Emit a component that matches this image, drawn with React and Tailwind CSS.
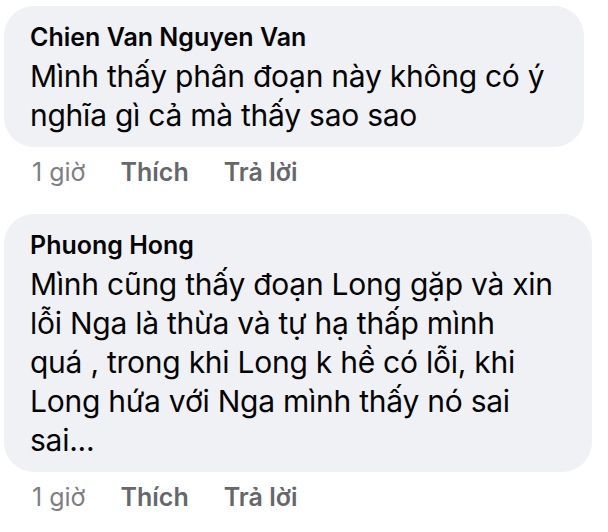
import React from "react";

const comments = [
  {
    name: "Chien Van Nguyen Van",
    width: "w-[580px]",
    lines: ["Mình thấy phân đoạn này không có ý", "nghĩa gì cả mà thấy sao sao"],
  },
  {
    name: "Phuong Hong",
    width: "w-[588px]",
    lines: [
      "Mình cũng thấy đoạn Long gặp và xin",
      "lỗi Nga là thừa và tự hạ thấp mình",
      "quá , trong khi Long k hề có lỗi, khi",
      "Long hứa với Nga mình thấy nó sai",
      "sai...",
    ],
  },
];

function Comment({ name, width, lines }) {
  return (
    <div className="flex flex-col items-start">
      {/* bubble */}
      <div className={`${width} rounded-[30px] bg-[#f0f1f5] pt-[17px] pb-[12px] pl-[26px] pr-[20px]`}>
        <div className="text-[25px] leading-[28px] font-semibold text-[#050505]">{name}</div>
        <div className="mt-[6px] text-[30px] leading-[39px] text-[#050505] tracking-[-0.25px] whitespace-nowrap">
          {lines.map((line, i) => (
            <div key={i}>{line}</div>
          ))}
        </div>
      </div>

      {/* actions */}
      <div className="mt-[11px] pl-[28px] flex items-center gap-[35px] text-[25px] leading-[28px] text-[#65676b]">
        <span className="font-normal text-[#7d7f84]">1 giờ</span>
        <span className="font-semibold">Thích</span>
        <span className="font-semibold">Trả lời</span>
      </div>
    </div>
  );
}

export default function App() {
  return (
    <div
      className="w-[608px] h-[532px] bg-white pl-[4px] pt-[6px] flex flex-col gap-[28px] overflow-hidden"
      style={{ fontFamily: "Inter, 'Noto Sans', sans-serif" }}
    >
      {comments.map((c, i) => (
        <Comment key={i} {...c} />
      ))}
    </div>
  );
}
